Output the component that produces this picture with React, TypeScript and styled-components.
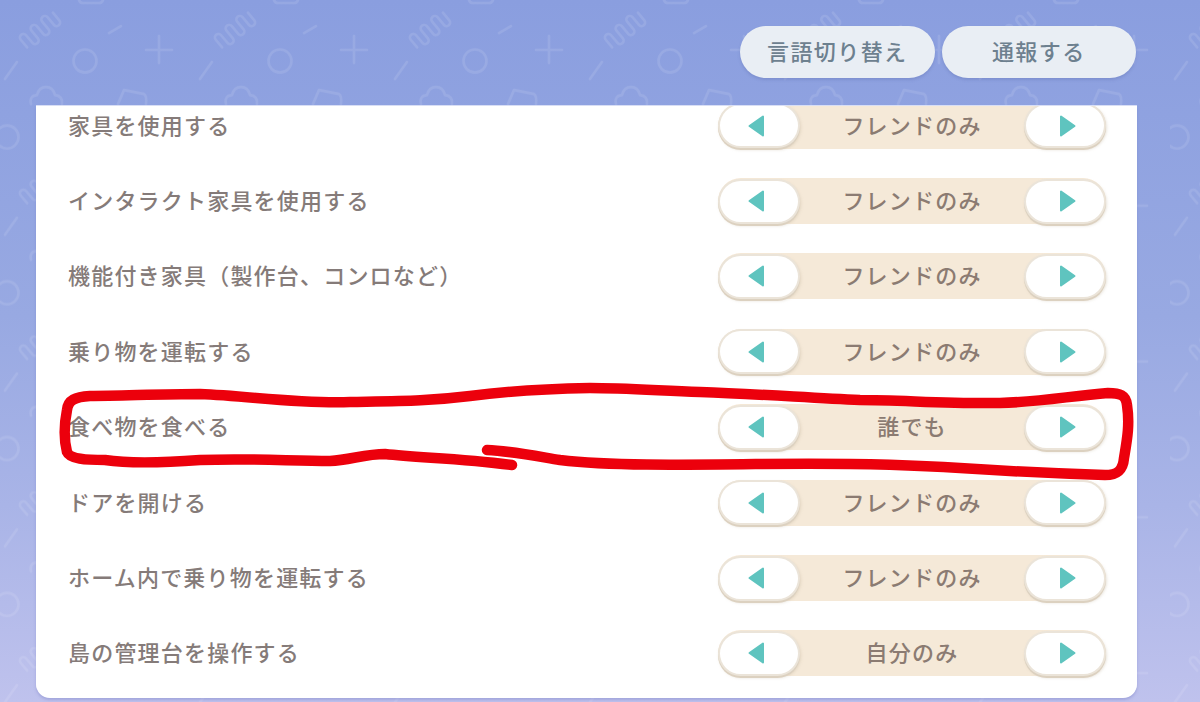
import React from "react";
import styled, { createGlobalStyle } from "styled-components";

const Global = createGlobalStyle`
  html, body { margin: 0; padding: 0; }
  body { font-family: "Noto Sans CJK JP", "Noto Sans", sans-serif; }
`;

const Screen = styled.div`
  position: relative;
  width: 1200px;
  height: 702px;
  overflow: hidden;
  background: linear-gradient(180deg, #8a9edf 0%, #98a9e2 45%, #a9b4e7 72%, #bfc2ed 100%);
`;

const PatternLayer = styled.svg`
  position: absolute;
  inset: 0;
  width: 100%;
  height: 100%;
`;

const Content = styled.div`
  position: relative;
  display: flex;
  flex-direction: column;
  height: 100%;
`;

const Header = styled.header`
  display: flex;
  justify-content: flex-end;
  gap: 7px;
  height: 106px;
  box-sizing: border-box;
  padding: 26px 64px 0 0;
`;

const HeaderButton = styled.button`
  width: 194.5px;
  height: 52px;
  border: 0;
  border-radius: 26px;
  background: #e9eef4;
  box-shadow: 0 2px 3px rgba(90, 105, 170, 0.3);
  color: #6d808f;
  font: 500 22px "Noto Sans CJK JP", sans-serif;
  letter-spacing: 1.4px;
  padding: 0 0 5px;
`;

const Panel = styled.main`
  margin: 0 63px 0 36px;
  height: 592px;
  background: #fff;
  border-radius: 0 0 14px 14px;
  box-shadow: 0 -1px 0 rgba(235, 238, 250, 0.8), 0 2px 3px rgba(110, 115, 190, 0.35);
  overflow: hidden;
`;

const List = styled.div`
  margin-top: -18px;
`;

const Row = styled.div`
  display: flex;
  align-items: center;
  justify-content: space-between;
  height: 75.4px;
  padding: 0 31px 0 32px;
`;

const Label = styled.span`
  padding-bottom: 4px;
  color: #857b79;
  font-size: 22px;
  font-weight: 500;
  letter-spacing: 1.2px;
`;

const Stepper = styled.div`
  display: flex;
  align-items: center;
  justify-content: space-between;
  width: 388px;
  height: 46px;
  box-sizing: border-box;
  padding: 0 2px;
  border-radius: 23px;
  background: #f5e9d8;
`;

const StepButton = styled.button<{ $side: "left" | "right" }>`
  display: flex;
  align-items: center;
  justify-content: ${(p) => (p.$side === "left" ? "flex-start" : "flex-end")};
  width: 78px;
  height: 41px;
  padding: ${(p) => (p.$side === "left" ? "0 0 0 28px" : "0 28px 0 0")};
  border: 0;
  border-radius: 21px;
  background: #fff;
  box-shadow: 0 0 0 2px #ebe4d9, 0 2px 0 2px #dcd1c0, 1px 2px 3px 2px rgba(190, 175, 150, 0.35);
`;

const Value = styled.span`
  padding-bottom: 4px;
  color: #8b7b72;
  font-size: 22px;
  font-weight: 500;
  letter-spacing: 1.2px;
`;

const Arrow = styled.svg`
  width: 16px;
  height: 22px;
  fill: #5fc4bf;
  stroke: #5fc4bf;
  stroke-width: 2;
  stroke-linejoin: round;
`;

const Annotation = styled.svg`
  position: absolute;
  inset: 0;
  width: 100%;
  height: 100%;
  pointer-events: none;
  fill: none;
  stroke: #ec000c;
  stroke-width: 10.5;
  stroke-linecap: round;
  stroke-linejoin: round;
`;

const rows = [
  ["家具を使用する", "フレンドのみ"],
  ["インタラクト家具を使用する", "フレンドのみ"],
  ["機能付き家具（製作台、コンロなど）", "フレンドのみ"],
  ["乗り物を運転する", "フレンドのみ"],
  ["食べ物を食べる", "誰でも"],
  ["ドアを開ける", "フレンドのみ"],
  ["ホーム内で乗り物を運転する", "フレンドのみ"],
  ["島の管理台を操作する", "自分のみ"],
];

const coil =
  "M-21 5 v-10 a3.5 3.5 0 0 1 7 0 v10 a3.5 3.5 0 0 0 7 0 v-10 a3.5 3.5 0 0 1 7 0 v10 a3.5 3.5 0 0 0 7 0 v-10 a3.5 3.5 0 0 1 7 0 v10 a3.5 3.5 0 0 0 7 0 v-10";

const Background = () => (
  <PatternLayer aria-hidden="true">
    <defs>
      <pattern id="toys" width="195" height="155.8" patternUnits="userSpaceOnUse">
        <g fill="none" stroke="#fff" strokeOpacity="0.1" strokeWidth="2.6" strokeLinecap="round" strokeLinejoin="round">
          <path d={coil} transform="translate(40 30) rotate(-40)" />
          <path d="M109 33 L121 26" />
          <path d="M146 50 H172 M159 36 V63" />
          <circle cx="85" cy="61" r="11.5" />
          <path d="M5 79 L17 62" />
          <path d="M31 104 q-2 -8 6 -9 q2 -8 9 -8 q7 0 9 8 q8 1 7 9" />
          <path d="M118 104 L124 90 L144 94 Q147 96 146 104" />
          <circle cx="7" cy="137" r="11.5" />
          <path d="M79 0 q1 3 4 3 h16 q3 0 4 -3" />
        </g>
      </pattern>
    </defs>
    <rect width="1200" height="702" fill="url(#toys)" />
  </PatternLayer>
);

export default function App() {
  return (
    <Screen>
      <Global />
      <Background />
      <Content>
        <Header>
          <HeaderButton>言語切り替え</HeaderButton>
          <HeaderButton>通報する</HeaderButton>
        </Header>
        <Panel>
          <List>
            {rows.map(([label, value]) => (
              <Row key={label}>
                <Label>{label}</Label>
                <Stepper>
                  <StepButton $side="left" aria-label="前へ">
                    <Arrow viewBox="0 0 16 22"><path d="M15 1.5 V20.5 L1.5 11 Z" /></Arrow>
                  </StepButton>
                  <Value>{value}</Value>
                  <StepButton $side="right" aria-label="次へ">
                    <Arrow viewBox="0 0 16 22"><path d="M1 1.5 V20.5 L14.5 11 Z" /></Arrow>
                  </StepButton>
                </Stepper>
              </Row>
            ))}
          </List>
        </Panel>
      </Content>
      <Annotation aria-hidden="true">
        <path d="M487 450 C510 451 530 455 560 460 C610 466 680 465 760 464 C840 463 900 464 960 468 C1020 472 1070 474 1105 475 C1118 475 1123 470 1124 458 C1127 440 1130 425 1127 405 C1126 395 1120 393 1108 393 C1070 396 1040 402 1000 403 C950 404 900 400 860 400 C810 398 760 394 700 392 C650 390 620 388 590 388 C540 389 500 392 470 396 C430 401 400 401 350 402 C300 404 250 396 200 394 C160 394 120 396 90 396 C75 397 68 400 67 410 C64 425 64 440 67 452 C70 459 85 460 105 460 C125 463 160 463 200 460 C250 458 290 461 330 461 C350 460 365 454 385 454 C420 458 460 458 512 465" />
      </Annotation>
    </Screen>
  );
}
